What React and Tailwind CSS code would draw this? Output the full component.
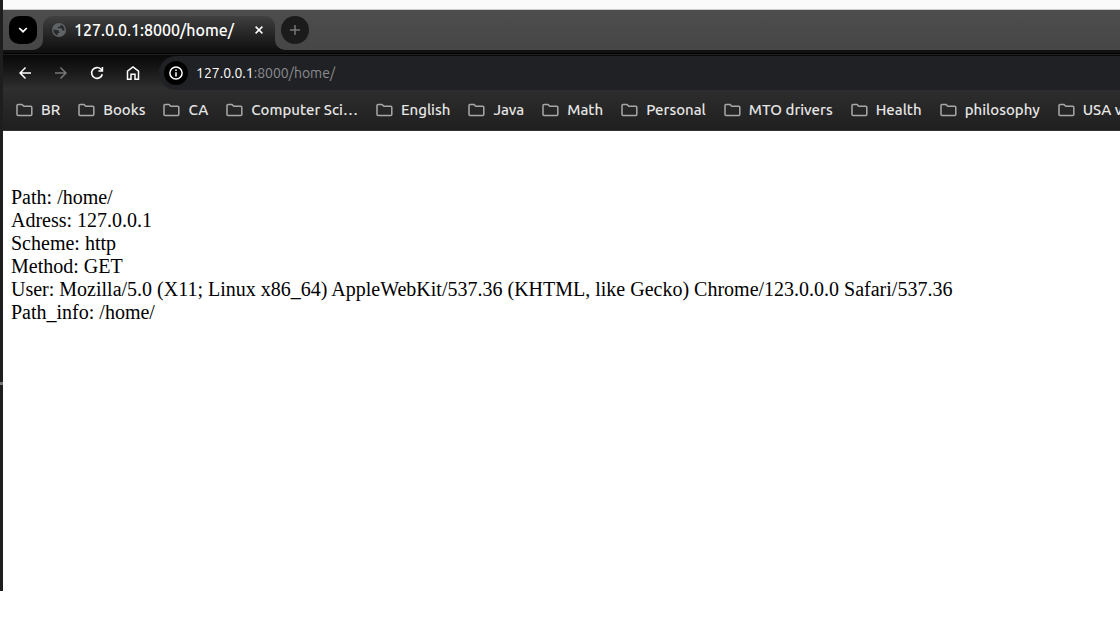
import React from "react";

const bookmarks = [
  "BR",
  "Books",
  "CA",
  "Computer Sci…",
  "English",
  "Java",
  "Math",
  "Personal",
  "MTO drivers",
  "Health",
  "philosophy",
  "USA v",
];

const details = [
  ["Path", "/home/"],
  ["Adress", "127.0.0.1"],
  ["Scheme", "http"],
  ["Method", "GET"],
  [
    "User",
    "Mozilla/5.0 (X11; Linux x86_64) AppleWebKit/537.36 (KHTML, like Gecko) Chrome/123.0.0.0 Safari/537.36",
  ],
  ["Path_info", "/home/"],
];

const paths = {
  back: "M16 7H3.83l5.59-5.59L8 0 0 8l8 8 1.41-1.41L3.83 9H16z",
  forward: "M8 0L6.59 1.41 12.17 7H0v2h12.17l-5.58 5.59L8 16l8-8z",
};

function Arrow({ d }) {
  return (
    <svg viewBox="0 0 16 16" className="size-3" fill="currentColor" aria-hidden="true">
      <path d={d} />
    </svg>
  );
}

function ReloadIcon() {
  return (
    <svg viewBox="0 0 14 14" className="size-3.5" fill="none" stroke="currentColor" strokeWidth="1.6" aria-hidden="true">
      <path d="M12.3 8.200A5.400 5.400 0 1 1 11 3.300L12.300 4.700" />
      <path d="M12.400 1V5H8.400" />
    </svg>
  );
}

function HomeIcon() {
  return (
    <svg viewBox="0 0 14 14" className="size-3.5" fill="none" stroke="currentColor" strokeWidth="1.5" aria-hidden="true">
      <path d="M1.500 13.200V5.200L7 1l5.500 4.200v8H9V8.300H5v4.900z" />
    </svg>
  );
}

function InfoIcon() {
  return (
    <svg viewBox="0 0 14 14" className="size-3.5" fill="none" stroke="currentColor" strokeWidth="1.5" aria-hidden="true">
      <circle cx="7" cy="7" r="6.100" />
      <path d="M7 6.200v4.200M7 3.500v1.600" />
    </svg>
  );
}

function GlobeIcon() {
  return (
    <svg viewBox="0 0 14 14" className="size-3.5 shrink-0" aria-hidden="true">
      <circle cx="7" cy="7" r="7" fill="#5f6368" />
      <path
        d="M1.500 6.600 5 7.100c1.200.2 2.300.9 2.300 2v.9H5.700v2.400A5.600 5.600 0 0 1 1.500 6.600zM8.600 1.700v.7c0 .8-.6 1.300-1.400 1.300H5.800v1.500h3c.8 0 1.300.6 1.300 1.300v.9h2.400A5.600 5.600 0 0 0 8.600 1.700z"
        fill="#292a2b"
      />
    </svg>
  );
}

function FolderIcon() {
  return (
    <svg viewBox="0 0 17 14" className="h-3.5 w-[17px] shrink-0" fill="none" stroke="#a8a8a8" strokeWidth="1.500" aria-hidden="true">
      <path d="M2 1.400h4l1.800 1.800h7q1 0 1 1v7.400q0 1-1 1H2q-1 0-1-1v-9.200q0-1 1-1z" />
    </svg>
  );
}

function TabStrip() {
  return (
    <div className="border-t border-[#cccccc] bg-[#4c4c4c] pt-1.5">
      <div className="flex h-[38px] border-b border-black bg-linear-to-b from-[#404040] to-[#111111] to-90%">
        <div className="flex h-[34px] w-10 rounded-br-[10px] bg-linear-to-b from-[#4c4c4c] to-[#464646] pl-1.5">
          <button type="button" aria-label="Search tabs" className="flex size-7 items-center justify-center rounded-[10px] bg-black text-white">
            <svg viewBox="0 0 10 6" className="h-1.5 w-2.5" fill="none" stroke="currentColor" strokeWidth="1.700" aria-hidden="true">
              <path d="M1.200 1 5 4.700 8.800 1" />
            </svg>
          </button>
        </div>
        <div className="h-[34px] w-[232px] bg-linear-to-b from-[#4b4b4b] from-30% to-[#111111] to-60%">
          <div className="flex h-[34px] items-center rounded-t-[10px] bg-linear-to-b from-[#404040] to-[#111111] pr-3 pb-1.5 pl-[9px] text-white">
            <GlobeIcon />
            <span className="ml-2 grow text-base leading-5 font-medium whitespace-nowrap">127.0.0.1:8000/home/</span>
            <button type="button" aria-label="Close tab">
              <svg viewBox="0 0 8 8" className="size-2" stroke="currentColor" strokeWidth="1.500" aria-hidden="true">
                <path d="M.6.6l6.800 6.800M7.400.6.6 7.400" />
              </svg>
            </button>
          </div>
        </div>
        <div className="flex h-[34px] grow rounded-bl-[10px] bg-linear-to-b from-[#4c4c4c] to-[#464646] pl-1.5">
          <button type="button" aria-label="New tab" className="flex size-7 items-center justify-center rounded-full bg-[#1b1b1b] text-[#777777]">
            <svg viewBox="0 0 10 10" className="size-2.5" stroke="currentColor" strokeWidth="1.500" aria-hidden="true">
              <path d="M5 0v10M0 5h10" />
            </svg>
          </button>
        </div>
      </div>
    </div>
  );
}

function Toolbar() {
  return (
    <div className="flex h-[34px] items-center">
      <nav aria-label="Navigation" className="flex w-[156px] gap-2 pl-2 text-white">
        <button type="button" aria-label="Back" className="flex size-7 items-center justify-center">
          <Arrow d={paths.back} />
        </button>
        <button type="button" aria-label="Forward" className="flex size-7 items-center justify-center text-[#777777]">
          <Arrow d={paths.forward} />
        </button>
        <button type="button" aria-label="Reload" className="flex size-7 items-center justify-center">
          <ReloadIcon />
        </button>
        <button type="button" aria-label="Home" className="flex size-7 items-center justify-center">
          <HomeIcon />
        </button>
      </nav>
      <div className="flex h-[34px] grow items-center rounded-l-full bg-[#202124] pl-[5px]">
        <button type="button" aria-label="Site information" className="flex size-6 items-center justify-center rounded-full bg-black text-white">
          <InfoIcon />
        </button>
        <a href="#home" aria-label="Page address" className="ml-2 text-sm leading-5 whitespace-nowrap text-[#8a8b8e]">
          <span className="text-white">127.0.0.1</span>:8000/home/
        </a>
      </div>
    </div>
  );
}

function BookmarksBar() {
  return (
    <nav aria-label="Bookmarks" className="flex h-10 items-center gap-[18px] overflow-hidden pl-[13px]">
      {bookmarks.map((name) => (
        <a key={name} href="#bookmark" className="flex shrink-0 items-center gap-2 text-[15px] leading-5 font-medium whitespace-nowrap text-[#e6e6e6]">
          <FolderIcon />
          {name}
        </a>
      ))}
    </nav>
  );
}

export default function App() {
  return (
    <div className="flex min-h-screen flex-col bg-white">
      <div className="flex">
        <div className="flex w-[3px] shrink-0 flex-col bg-[#1e1e1e] pt-[382px]">
          <div className="h-[3px] bg-[#777777]" />
        </div>
        <div className="min-h-[591px] min-w-0 grow">
          <header className="overflow-hidden font-['Ubuntu','Noto_Sans',sans-serif]">
            <div className="h-[9px] bg-[#fafafa]" />
            <TabStrip />
            <div className="border-t border-[#222222] bg-linear-to-b from-[#080808] via-[#2e2e2e] via-45% to-[#1f1f1f] pt-px">
              <Toolbar />
              <BookmarksBar />
            </div>
            <div className="h-px bg-[#333333]" />
          </header>
          <main className="px-2 pt-[55px] font-['Liberation_Serif',serif] text-[20px] leading-[23px] text-black">
            {details.map(([label, value]) => (
              <p key={label}>
                {label}: {value}
              </p>
            ))}
          </main>
        </div>
      </div>
    </div>
  );
}
